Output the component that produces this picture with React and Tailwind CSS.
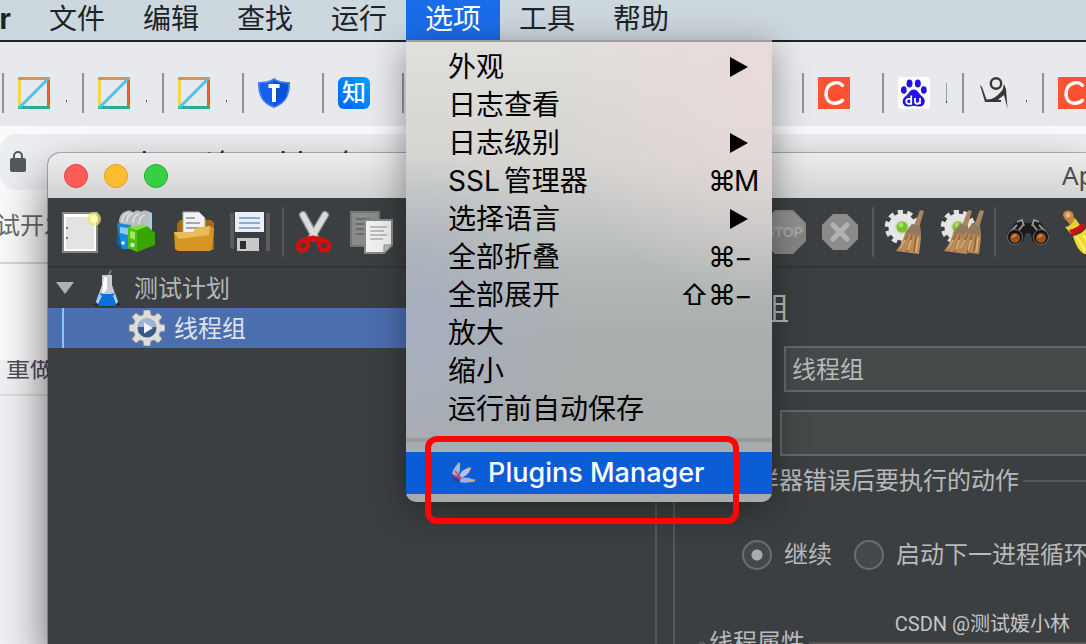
import React, { useState } from 'react';
import clsx from 'clsx';

const menus = ['文件', '编辑', '查找', '运行', '选项', '工具', '帮助'];

const optionItems = [
  { label: '外观', submenu: true },
  { label: '日志查看' },
  { label: '日志级别', submenu: true },
  { label: 'SSL', cjk: '管理器', mods: '⌘', keyName: 'M' },
  { label: '选择语言', submenu: true },
  { label: '全部折叠', mods: '⌘', keyName: '−' },
  { label: '全部展开', shift: true, mods: '⌘', keyName: '−' },
  { label: '放大' },
  { label: '缩小' },
  { label: '运行前自动保存' },
];

const SquareIcon = () => <svg viewBox="0 0 32 32" className="h-8 w-8">
  <path d="M1.500 1v30" stroke="#f0d84e" strokeWidth="3" />
  <path d="M30.500 1v30" stroke="#ea5f1d" strokeWidth="3" />
  <path d="M0 1.500h32" stroke="#e2914a" strokeWidth="3" />
  <path d="M0 30.500h32" stroke="#27ad98" strokeWidth="3" />
  <path d="M1 31 31 1" stroke="#4fc3ea" strokeWidth="3" />
</svg>;

const ShieldIcon = () => <svg viewBox="0 0 32 32" className="h-8 w-8">
  <path d="M16 1c4 3 9 4 16 4 0 13-3 21-16 26C3 26 0 18 0 5c7 0 12-1 16-4z" fill="#3c7bef" />
  <path d="M16 3c4 3 8 3.500 14 4 0 11-3 18-14 22C5 25 2 18 2 7c6-.5 10-1 14-4z" fill="#1560ee" />
  <path d="M16 3c4 3 8 3.500 14 4 0 11-3 18-14 22z" fill="#0b4fd6" />
  <path d="M10.500 7h11v4h-3.500v14h-4V11h-3.500z" fill="#fff" />
</svg>;

const ZhiIcon = () => <span className="flex h-8 w-8 items-center justify-center rounded-md bg-linear-to-tr from-[#0560fb] to-[#10a0ff] text-2xl leading-8 font-medium text-white">知</span>;

const CIcon = () => <svg viewBox="0 0 32 32" className="h-8 w-8">
  <path d="M0 0h32v32H0z" fill="#fc5132" />
  <path d="M24.500 8.500C22.500 6 19 5 15.500 6.200 10 8 7.500 13 8 18c.5 5.500 4 8.500 9 8.300 3-.1 5.500-1 7.500-3" fill="none" stroke="#fff" strokeWidth="3.400" strokeLinecap="round" />
</svg>;

const BaiduIcon = () => <svg viewBox="0 0 32 32" className="h-8 w-8">
  <rect width="32" height="32" rx="4" fill="#fff" />
  <g fill="#2512e6">
    <ellipse cx="11.500" cy="6.500" rx="3" ry="4" />
    <ellipse cx="19.800" cy="6.500" rx="3" ry="4" />
    <ellipse cx="5.800" cy="13" rx="2.900" ry="3.800" />
    <ellipse cx="25.800" cy="13" rx="2.900" ry="3.800" />
    <path d="M15.800 12.500c4 0 5 4.500 8.500 7 4.500 3.500 2.500 10-2.500 10-2.500 0-4-.8-6-.8s-3.500.8-6 .8c-5.500 0-7-6.500-2.500-10 3.500-2.500 4.500-7 8.500-7z" />
  </g>
  <path d="M13.200 18.500v8.300h-2.500a2.500 2.500 0 0 1 0-5h2.500M17 21v3.500c0 3 4.500 3 5 0V21v6" fill="none" stroke="#fff" strokeWidth="1.800" />
</svg>;

const FigureIcon = () => <svg viewBox="0 0 32 32" className="h-8 w-8">
  <circle cx="18" cy="6.500" r="5.200" fill="none" stroke="#3a3635" strokeWidth="2.400" />
  <path d="M2 8l2 2 4.500 12.500 5-.5c5-2 8-6 11-9L26 7l2 5 1.500 19.500L26 18l-4 3-2 2h3v2H7z" fill="#3a3635" />
</svg>;

const LockIcon = () => <svg viewBox="0 0 16 22" className="h-[22px] w-4">
  <rect y="7" width="16" height="14" rx="2" fill="#55585c" />
  <path d="M4 8V5a4 4 0 0 1 8 0v3" fill="none" stroke="#55585c" strokeWidth="2" />
</svg>;

const bookmarks = [
  { name: 'b1', Icon: SquareIcon, trail: 'dot' },
  { name: 'b2', Icon: SquareIcon, trail: 'dot' },
  { name: 'b3', Icon: SquareIcon, trail: 'dot' },
  { name: 'b4', Icon: ShieldIcon },
  { name: 'b5', Icon: ZhiIcon },
  { name: 'b6' }, { name: 'b7' }, { name: 'b8' }, { name: 'b9' }, { name: 'b10' },
  { name: 'b11', Icon: CIcon },
  { name: 'b12', Icon: BaiduIcon, trail: 'bar' },
  { name: 'b13', Icon: FigureIcon, trail: 'dot' },
  { name: 'b14', Icon: CIcon },
];

const NewIcon = () => <svg viewBox="0 0 44 44" className="h-11 w-11">
  <path d="M3 3h34v39H3z" fill="#fff" stroke="#85887f" strokeWidth="2" />
  <path d="M6 7h28v32H6z" fill="#e3e3e3" />
  <path d="M6 18h2M6 28h2" stroke="#777" strokeWidth="2" />
  <circle cx="34" cy="9" r="7" fill="#f1e56a" opacity=".75" />
  <circle cx="34" cy="9" r="4" fill="#fffbb5" />
</svg>;

const TemplatesIcon = () => <svg viewBox="0 0 44 44" className="h-11 w-11">
  <path d="M3 12C3 6 6 2 11 1c3-1 5 0 6 2 2-3 6-3 8-1 2-2 5-2 9 0l2 1v17H8z" fill="#b9bdbf" />
  <path d="M6 12c0-5 3-8 7-9M11 12c0-5 3-8 6-9M17 13c0-5 2-8 6-9M23 14c0-5 2-8 6-9" stroke="#e0e2e3" strokeWidth="1.500" fill="none" />
  <path d="M34 3h2v16h-5z" fill="#a9cbe0" />
  <path d="M1 13l5 3v23l-5-5z" fill="#0b63a5" />
  <path d="M1 13l14 2v24H6z" fill="#178bd9" />
  <path d="M4 17l8 1v7l-8-2z" fill="#8cc8ef" />
  <path d="M12 17l9 3v22l-9-4z" fill="#4fc010" />
  <path d="M21 20l10-4 8 7v12l-18 7z" fill="#39a600" />
  <path d="M12 17l15-2 5 1-11 4z" fill="#7fe03e" />
  <path d="M14 21l5 1v8l-5-2z" fill="#9fe768" />
  <circle cx="7" cy="33" r="1.800" fill="#fff" />
  <circle cx="16.500" cy="35" r="2" fill="#fff" />
</svg>;

const OpenIcon = () => <svg viewBox="0 0 44 44" className="h-11 w-11">
  <path d="M5 14l3-4h31l3 3v27H6z" fill="#a46d09" />
  <path d="M11 2h16l6 6v16H11z" fill="#f2f2f2" stroke="#aaa" />
  <path d="M14 8h9M14 13h14M14 18h14" stroke="#a7a7a7" strokeWidth="2" />
  <path d="M2 22h19l4-4 13-2 4 2-2 21-2 2H6l-3-2z" fill="#d69622" />
  <path d="M2 22h19l4-4 13-2-1 9-30 4z" fill="#e9bb5b" />
</svg>;

const SaveIcon = () => <svg viewBox="0 0 44 44" className="h-11 w-11">
  <path d="M2 3h40v38H5l-3-3z" fill="#3c3c40" />
  <path d="M2 3h4v36l-4-1zM38 3h4v38h-4z" fill="#5c5c60" />
  <path d="M7 2h29v20H7z" fill="#e9f0f7" />
  <path d="M11 8h21M11 13h21M11 18h21" stroke="#8facd0" strokeWidth="2" />
  <path d="M9 28h22v13H9z" fill="#c9c9c9" />
  <path d="M12 31h6v8h-6z" fill="#303033" />
</svg>;

const CutIcon = () => <svg viewBox="0 0 44 44" className="h-11 w-11">
  <path d="M9 5l12 22M31 5 18 27" stroke="#8d8f90" strokeWidth="8" strokeLinecap="round" />
  <path d="M9 5l12 22M31 5 18 27" stroke="#dcdcdc" strokeWidth="5.500" strokeLinecap="round" />
  <g fill="none" stroke="#d80d0d" strokeWidth="4.500">
    <ellipse cx="9" cy="35.500" rx="5.500" ry="4.500" transform="rotate(-40 9 35.500)" />
    <ellipse cx="30" cy="35.500" rx="5.500" ry="4.500" transform="rotate(40 30 35.500)" />
    <path d="M11 30l8-2 9 2" strokeWidth="5" />
  </g>
</svg>;

const CopyIcon = () => <svg viewBox="0 0 44 44" className="h-11 w-11">
  <path d="M1 2h28v34H1z" fill="#8a8c8b" stroke="#757776" strokeWidth="2" />
  <path d="M6 9h14M6 14h14M6 19h14M6 24h8" stroke="#6b6d6c" strokeWidth="2" />
  <path d="M15 10h27v25l-8 8H15z" fill="#f1f1f0" stroke="#888a85" strokeWidth="2" />
  <path d="M20 17h17M20 21h14M20 25h17M20 29h13" stroke="#adadad" strokeWidth="1.500" />
  <path d="M34 43v-8h8z" fill="#bcbcba" stroke="#888a85" />
</svg>;

const StopIcon = () => <span className="relative flex h-11 w-11 items-center justify-center">
  <svg viewBox="0 0 44 44" className="absolute h-11 w-11"><path d="M13 0h18l13 13v18L31 44H13L0 31V13z" fill="#858585" /><path d="M13 2h18l11 11v8H2v-8z" fill="#8f8f8f" /></svg>
  <span className="relative font-['Liberation_Sans'] text-sm font-bold text-[#a6a6a6]">STOP</span>
</span>;

const ShutdownIcon = () => <svg viewBox="0 0 44 44" className="h-11 w-11">
  <path d="M15 4h14l11 11v14L29 40H15L4 29V15z" fill="#8b8b8b" />
  <path d="M15 15l14 14M29 15 15 29" stroke="#b3b3b3" strokeWidth="5" strokeLinecap="round" />
</svg>;

const Gear = () => <g>
  <circle cx="18" cy="17" r="15" fill="none" stroke="#e2e2e2" strokeWidth="4.500" strokeDasharray="5.200 4.225" />
  <circle cx="18" cy="17" r="13.500" fill="#e6e6e6" />
  <circle cx="18" cy="17" r="7" fill="#d3d6d0" />
  <circle cx="18" cy="17" r="5.500" fill="#74c51c" />
  <circle cx="17" cy="15" r="2.500" fill="#a5e25e" />
</g>;

const Broom = ({ x }) => <g transform={`translate(${x} 0)`}>
  <path d="M36 0l4 1-5 17h-6z" fill="#a98662" />
  <path d="M28 14l8 2 1 12-2 16-8-1-15-2c4-5 7-10 9-18z" fill="#b98a59" />
  <path d="M28 14l8 2 1 10-16-3z" fill="#95795f" />
  <path d="M24 24l-8 16M28 25l-5 17M32 26l-2 16" stroke="#8e653a" strokeWidth="1.500" />
  <path d="M21 30l-5 9M27 30l-3 10M34 28l-2 14" stroke="#e0b47a" strokeWidth="1.500" />
</g>;

const ClearIcon = () => <svg viewBox="0 0 44 44" className="h-11 w-11"><Gear /><Broom x={0} /></svg>;
const ClearAllIcon = () => <svg viewBox="0 0 44 44" className="h-11 w-11"><Gear /><Broom x={-8} /><Broom x={4} /></svg>;

const SearchIcon = () => <svg viewBox="0 0 44 44" className="h-11 w-11">
  <path d="M1 24 10 12l6-3 3 4h6l3-4 6 3 9 12-4 10-12-2-3-9h-4l-3 9-12 2z" fill="#1b1b1c" />
  <path d="M11 12l5-2 2 6M33 12l-5-2-2 6M4 22l7-7M40 22l-7-7M13 20l4-5M31 20l-4-5" stroke="#999" strokeWidth="1.800" fill="none" />
  <circle cx="9" cy="27" r="7.500" fill="#111" stroke="#6c6c6c" />
  <circle cx="35" cy="27" r="7.500" fill="#111" stroke="#6c6c6c" />
  <circle cx="9" cy="28" r="5" fill="#9a531d" /><circle cx="35" cy="28" r="5" fill="#9a531d" />
  <path d="M6 27l4-2M32 27l4-2" stroke="#d28a4c" strokeWidth="2" />
</svg>;

const ResetIcon = () => <svg viewBox="0 0 44 44" className="h-11 w-11">
  <path d="M1 4c1-4 7-5 10-1 1 3 0 4 3 7l-6 5c-2-4-7-6-7-11z" fill="#c88540" />
  <circle cx="6" cy="5" r="2.500" fill="#e8b67e" />
  <path d="M3 17c4 0 9-5 10-9l5 7-9 9z" fill="#e3d238" />
  <path d="M7 20c5-1 11-4 13-8l3 4c-2 5-8 8-13 9z" fill="#cf1010" />
  <path d="M11 26c5-1 11-4 13-8l10 5 10 10v11H22c-6-4-9-11-11-18z" fill="#eedb2c" />
  <path d="M15 27l8 14M21 25l12 18" stroke="#fff27a" strokeWidth="2" />
</svg>;

const toolbarLeft = [['新建', NewIcon], ['模板', TemplatesIcon], ['打开', OpenIcon], ['保存', SaveIcon], null, ['剪切', CutIcon], ['复制', CopyIcon]];
const toolbarRight = [['停止', StopIcon], ['关闭', ShutdownIcon], null, ['清除', ClearIcon], ['清除全部', ClearAllIcon], null, ['查找', SearchIcon], ['重置', ResetIcon]];

const FlaskIcon = () => <svg viewBox="0 0 28 38" className="h-[38px] w-7">
  <ellipse cx="14" cy="35.500" rx="14" ry="2" fill="#26282a" />
  <path d="M15 8l3-7" stroke="#777" strokeWidth="2" />
  <path d="M9 6h10v10l6 17-3 3H6l-3-3 6-17z" fill="#c9cccd" />
  <path d="M11 8h3v12l-5 6z" fill="#fff" />
  <path d="M6 24l5 1h7l4-1 3 9-3 4H6l-3-4z" fill="#0d6fdc" />
  <path d="M6 24l-3 9 2 2 4-8zM22 24l3 9-2 2-3-8z" fill="#a9c8f0" />
</svg>;

const ThreadIcon = () => <svg viewBox="0 0 36 36" className="h-9 w-9">
  <path d="M15 0h6l1 5 3 1 4-3 4 4-3 4 1 3 5 1v6l-5 1-1 3 3 4-4 4-4-3-3 1-1 5h-6l-1-5-3-1-4 3-4-4 3-4-1-3-5-1v-6l5-1 1-3-3-4 4-4 4 3 3-1z" fill="#deddda" stroke="#9a9c9c" />
  <circle cx="18" cy="18" r="9.500" fill="#35588f" />
  <path d="M9 17a9 9 0 0 1 18 0z" fill="#9fb4d3" />
  <path d="M15 12.500v11l9-5.500z" fill="#eef3fa" />
</svg>;

const PluginsIcon = () => <svg viewBox="0 0 26 22" className="h-[22px] w-[26px]">
  <path d="M2 12C3 7 6 3 9 1c2 3 1 8-1 13z" fill="#aab4dc" />
  <path d="M9 14c2-5 6-8 11-8 1 4-4 8-10 11z" fill="#b9bfe2" />
  <path d="M9 18c5-4 11-3 16 1-5 2-11 2-16 1z" fill="#9fb0e4" />
  <path d="M1 12l9 6v3l-7-2z" fill="#3042a8" />
  <path d="M5 9l6 7M3 13l8 4" stroke="#c34a62" strokeWidth="1.500" />
  <path d="M8 1l2 2M18 6l3 1M22 19l3-1" stroke="#e5a54a" strokeWidth="2" />
</svg>;

function Toolbar({ items }) {
  return items.map((item, i) => {
    if (!item) return <span key={i} className="mx-1 h-[50px] w-0.5 shrink-0 bg-[#555759]" />;
    const [label, Icon] = item;
    return <button key={label} aria-label={label} className="flex h-14 w-14 shrink-0 items-center justify-center"><Icon /></button>;
  });
}

function OptionsMenu() {
  return <div className="absolute top-full left-0 z-30 w-[366px] rounded-b-[10px] border-t-2 border-[#a29c9b] bg-[radial-gradient(circle_at_100%_8%,#e8dada_0%,transparent_40%),radial-gradient(circle_at_0%_62%,#a7afc0_0%,transparent_38%),linear-gradient(#dfdfdc_0%,#d6d5d2_25%,#c6c8c6_36%,#b5bab8_48%,#a9adad_65%,#a7abab_100%)] pt-1.5 pb-2 text-black shadow-[0_8px_36px_rgba(0,0,0,0.4)]">
    <ul>
      {optionItems.map((item) => <li key={item.label}>
        <button className="flex h-[38px] w-full items-center pr-3 pl-[42px] text-left">
          <span className="flex flex-1 gap-1 whitespace-nowrap">{item.label}{item.cjk && <span>{item.cjk}</span>}</span>
          {item.submenu && <svg viewBox="0 0 18 20" className="mr-3 h-5 w-[18px]"><path d="M0 0l18 10L0 20z" fill="currentColor" /></svg>}
          {item.shift && <span className="w-7">⇧</span>}
          {item.mods && <span className="w-[26px]">{item.mods}</span>}
          {item.keyName && <span className="w-[26px]">{item.keyName}</span>}
        </button>
      </li>)}
    </ul>
    <hr className="my-2.5 border-t-4 border-[#969b9b]" />
    <div className="relative">
      <button className="flex h-[42px] w-full items-center gap-3 bg-[#0a5dd7] pl-[44px] text-left text-[27px] text-white">
        <PluginsIcon />
        <span className="font-medium whitespace-nowrap">Plugins Manager</span>
      </button>
      <span className="pointer-events-none absolute -top-4 right-[33px] -bottom-[30px] left-[19px] rounded-xl border-6 border-[#ff0505]" />
    </div>
  </div>;
}

function MenuBar() {
  const [open, setOpen] = useState('选项');
  return <nav className="relative z-20 flex h-10 shrink-0 bg-[#cdd7de] text-[28px] leading-[38px] text-[#1b2429]">
    <button className="flex w-[30px] justify-end pr-[19px] font-bold">r</button>
    {menus.map((m) => <div key={m} className="relative">
      <button onClick={() => setOpen(open === m ? '' : m)} className={clsx('flex h-10 px-[19px] whitespace-nowrap', open === m && 'bg-[#1a6dea] text-white')}>{m}</button>
      {m === '选项' && open === m && <OptionsMenu />}
    </div>)}
  </nav>;
}

function Browser() {
  return <main className="flex flex-1 flex-col border-t-2 border-[#1c2429] bg-white">
    <div className="flex h-[84px] items-center overflow-hidden bg-[#e8e9ed] pt-[18px] pl-0.5">
      {bookmarks.map(({ name, Icon, trail }) => <a key={name} href="#" aria-label={name} className="flex h-10 w-20 shrink-0 items-center border-l-2 border-[#929397] pl-3.5">
        {Icon && <Icon />}
        {trail === 'dot' && <span className="mt-4 ml-4 h-0.5 w-px bg-gray-600" />}
        {trail === 'bar' && <span className="ml-4 h-5 w-px border-b-2 border-gray-700 bg-gray-400" />}
      </a>)}
    </div>
    <div className="bg-[#fafafa] py-2">
      <div className="flex h-14 items-center rounded-l-2xl bg-[#eceef1] pl-2.5 text-[28px]">
        <LockIcon />
        <span className="pl-6 whitespace-nowrap text-[#202124]">mp.csdn.net/mp_blog/creation</span>
      </div>
    </div>
    <div className="-ml-1 flex h-[66px] items-center overflow-hidden border-b-2 border-[#d4d5d6] bg-[#fafafa] pb-2 text-2xl whitespace-nowrap text-[#66696c]">试开发</div>
    <div className="h-24 bg-[#fafafa]" />
    <div className="flex h-9 items-center overflow-hidden border-b-2 border-[#dcdcde] bg-[#f1f1f3] pb-4 pl-1.5 text-2xl leading-6 whitespace-nowrap text-[#4d4d5c]">重做</div>
    <div className="flex-1 bg-[#eff1f4]" />
  </main>;
}

function TestTree() {
  return <aside className="w-[609px] shrink-0 border-r-2 border-[#555759] text-2xl leading-[42px] text-[#b4b6b8]">
    <div className="flex h-10 items-center">
      <svg viewBox="0 0 18 12" className="ml-2 h-3 w-[18px]"><path d="M0 0h18L9 12z" fill="#aeb0b1" /></svg>
      <span className="ml-[19px]"><FlaskIcon /></span>
      <span className="ml-[13px] pt-0.5">测试计划</span>
    </div>
    <div className="flex h-10 items-center bg-[#4b6eaf] text-[#dfe2e8]">
      <span className="ml-3.5 h-10 w-0.5 bg-[#86c5ff]" />
      <span className="ml-[65px]"><ThreadIcon /></span>
      <span className="ml-[9px] pt-0.5">线程组</span>
    </div>
  </aside>;
}

function Radio({ id, label, defaultChecked }) {
  return <div className="flex shrink-0 items-center gap-3">
    <input id={id} name="onError" type="radio" defaultChecked={defaultChecked} className="h-[30px] w-[30px] appearance-none rounded-full border-2 border-[#6b6d6e] bg-[#43494a] checked:bg-[radial-gradient(circle,#a9abab_0,#a9abab_5px,transparent_6px)]" />
    <label htmlFor={id} className="whitespace-nowrap">{label}</label>
  </div>;
}

function ThreadGroupForm() {
  return <section className="ml-4 flex-1 overflow-hidden border-l-2 border-[#555759] pt-5 pl-6 text-2xl leading-9 text-[#b7b9bb]">
    <h1 className="text-[30px] leading-10">线程组</h1>
    <div className="mt-[18px] flex items-center">
      <label htmlFor="name" className="w-[85px] shrink-0">名称：</label>
      <input id="name" defaultValue="线程组" className="h-[46px] w-full border-2 border-r-0 border-[#656869] bg-[#45494a] px-1.5 pb-1" />
    </div>
    <div className="mt-[18px] flex items-center">
      <label htmlFor="comment" className="w-[81px] shrink-0">注释：</label>
      <input id="comment" className="h-[46px] w-full border-2 border-r-0 border-[#656869] bg-[#45494a] px-1.5 pb-1" />
    </div>
    <div className="mt-[7px] flex items-center gap-1">
      <span className="h-0.5 w-1 bg-[#555759]" />
      <h2 className="shrink-0">在取样器错误后要执行的动作</h2>
      <span className="h-0.5 flex-1 bg-[#555759]" />
    </div>
    <div className="mt-[38px] flex gap-[22px] pl-[43px]">
      <Radio id="continue" label="继续" defaultChecked />
      <Radio id="next" label="启动下一进程循环" />
    </div>
    <div className="mt-[52px] flex items-center gap-1">
      <span className="h-0.5 w-1.5 bg-[#555759]" />
      <h2 className="shrink-0">线程属性</h2>
      <span className="h-0.5 flex-1 bg-[#555759]" />
    </div>
  </section>;
}

function JMeterWindow() {
  return <div className="absolute top-[153px] right-0 bottom-0 left-12 z-10 flex flex-col overflow-hidden rounded-tl-xl bg-[#3c3f41] shadow-[0_24px_48px_rgba(0,0,0,0.6),0_0_0_1px_rgba(0,0,0,0.25)]">
    <header className="flex h-[45px] shrink-0 items-center gap-4 bg-linear-to-b from-[#ececec] to-[#d2d2d2] pl-4">
      <button aria-label="关闭窗口" className="h-6 w-6 rounded-full border border-[#e0443e] bg-[#fc5b57]" />
      <button aria-label="最小化" className="h-6 w-6 rounded-full border border-[#dea123] bg-[#fdbd2f]" />
      <button aria-label="最大化" className="h-6 w-6 rounded-full border border-[#22a934] bg-[#35d043]" />
      <span className="ml-auto w-6 font-['Noto_Sans'] text-[26px] whitespace-nowrap text-[#4c4c4c]">Apache JMeter</span>
    </header>
    <div className="flex h-[70px] shrink-0 items-center overflow-hidden border-b-2 border-[#323537] pl-1.5">
      <Toolbar items={toolbarLeft} />
      <span className="w-[356px] shrink-0" />
      <Toolbar items={toolbarRight} />
    </div>
    <div className="flex flex-1 overflow-hidden">
      <TestTree />
      <ThreadGroupForm />
    </div>
  </div>;
}

export default function App() {
  return <div className="relative flex h-screen flex-col overflow-hidden font-[Inter,'Noto_Sans_CJK_SC',sans-serif]">
    <MenuBar />
    <Browser />
    <JMeterWindow />
    <span className="absolute right-4 bottom-1.5 z-20 font-[Roboto,'Noto_Sans_CJK_SC',sans-serif] text-xl text-[#c4c5c6]">CSDN @测试媛小林</span>
  </div>;
}
